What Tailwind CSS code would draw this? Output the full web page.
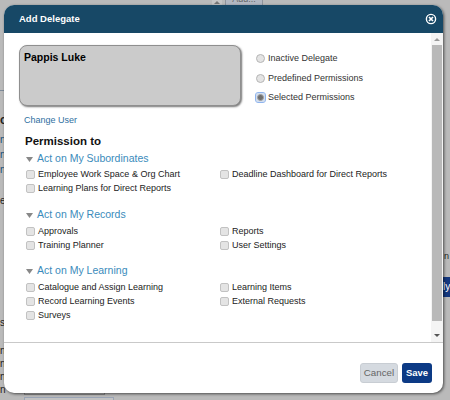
<!DOCTYPE html>
<html>
<head>
<script src="https://cdn.jsdelivr.net/npm/@tailwindcss/browser@4"></script>
</head>
<body class="m-0">
<div class="relative w-[450px] h-[400px] overflow-hidden bg-[#bababa] font-['Liberation_Sans',Arial,sans-serif]">
  <div class="absolute left-[212px] top-0 w-[10px] h-[5px] bg-[#c6c6c6] flex justify-center pt-[1px]"><svg class="w-[6px] h-[3px]" viewBox="0 0 6 3"><path d="M0 3h6L3 0z" fill="#777"/></svg></div>
  <div class="absolute left-[225px] top-0 w-[38px] h-[5px] bg-[#b3b8c2] border-x border-[#8f949c] overflow-hidden text-[9px] text-[#666] text-center leading-[9px]"><span class="relative -top-[5px]">Add...</span></div>
  <div class="absolute left-0 top-[90px] w-[4px] h-px bg-[#7d8a99]"></div>
  <div class="absolute left-0 top-[113px] text-[12px] leading-[14px] font-bold text-[#222]">c</div>
  <div class="absolute left-0 top-[133px] text-[10px] leading-[14px] text-[#17507a]">n</div>
  <div class="absolute left-0 top-[148px] text-[10px] leading-[14px] text-[#17507a]">n</div>
  <div class="absolute left-0 top-[163px] text-[10px] leading-[14px] text-[#17507a]">n</div>
  <div class="absolute left-0 top-[194px] text-[10px] leading-[14px] text-[#222]">e</div>
  <div class="absolute left-0 top-[316px] text-[10px] leading-[14px] text-[#222]">s</div>
  <div class="absolute left-0 top-[344px] text-[10px] leading-[14px] text-[#222]">n</div>
  <div class="absolute left-0 top-[357px] text-[10px] leading-[14px] text-[#222]">n</div>
  <div class="absolute left-0 top-[370px] text-[10px] leading-[14px] text-[#222]">n</div>
  <div class="absolute left-0 top-[383px] text-[10px] leading-[14px] text-[#222]">n</div>
  <div class="absolute left-[444px] top-[249px] w-[6px] overflow-hidden whitespace-nowrap text-[9px] leading-[14px] text-[#222]">n t</div>
  <div class="absolute left-[443px] top-[277px] w-[7px] h-[20px] bg-[#14387f] text-white text-[10px] leading-[20px] overflow-hidden">ly</div>
  <div class="absolute left-[24px] top-[397px] w-[90px] h-[4px] border border-[#9aa4b5] bg-[#c2c2c2]"></div>
  <div class="absolute left-[24px] top-[390px] w-[81px] h-[5px] border border-[#888] bg-[#bdbdbd]"></div>

  <div class="absolute left-[4px] top-[5px] w-[439px] h-[388px] flex flex-col bg-white rounded-[10px] shadow-[1px_1px_3px_rgba(0,0,0,0.6)] overflow-hidden">
    <div class="h-[28px] shrink-0 bg-[#174866] flex items-center justify-between pl-[15px] pr-[6px]">
      <span class="text-white font-bold text-[9.5px]">Add Delegate</span>
      <svg class="w-[12px] h-[12px]" viewBox="0 0 12 12"><circle cx="6" cy="6" r="4.6" fill="none" stroke="#fff" stroke-width="1.4"/><path d="M4 4l4 4M8 4l-4 4" stroke="#fff" stroke-width="1.7"/></svg>
    </div>
    <div class="relative h-[310px] shrink-0 flex border-b border-[#c9c9c9]">
      <div class="flex-1 pl-[15px] pt-[12px]">
        <div class="flex">
          <div class="w-[222px] h-[61px] rounded-[8px] bg-[#cbcbcb] border border-[#8f8f8f] shadow-[1px_1px_2px_rgba(0,0,0,0.55)] px-[4px] py-[4px] text-[10.5px] leading-[14px] font-bold text-black">Pappis Luke</div>
          <div class="ml-[15px] pt-[4px] flex flex-col">
            <label class="h-[19.5px] flex items-center gap-[3px] text-[9px] text-[#333]"><span class="w-[9px] h-[9px] rounded-full border border-[#b5b5b5] bg-[#e4e4e4]"></span>Inactive Delegate</label>
            <label class="h-[19.5px] flex items-center gap-[3px] text-[9px] text-[#333]"><span class="w-[9px] h-[9px] rounded-full border border-[#b5b5b5] bg-[#e4e4e4]"></span>Predefined Permissions</label>
            <label class="h-[19.5px] flex items-center gap-[3px] text-[9px] text-[#333]"><span class="w-[9px] h-[9px] rounded-[2px] bg-[#d3deee] outline outline-[1px] outline-[#8fb4ee] flex items-center justify-center"><span class="w-[7px] h-[7px] rounded-full bg-[#6f6f6f] border border-[#a0a0a0]"></span></span>Selected Permissions</label>
          </div>
        </div>
        <div class="mt-[6px] ml-[5px] text-[9px] leading-[12px] text-[#2f6f9f]">Change User</div>
        <div class="mt-[8px] ml-[6px] text-[11.5px] leading-[15px] font-bold text-[#111]">Permission to</div>

        <div class="mt-[4px] ml-[7px] flex items-center gap-[4px] h-[13px] text-[#3a8bbb] text-[10.5px]"><svg class="w-[7px] h-[5px]" viewBox="0 0 7 5"><path d="M0 0h7L3.5 5z" fill="#888"/></svg>Act on My Subordinates</div>
        <div class="mt-[2px] ml-[7px] grid grid-cols-[194px_1fr] auto-rows-[14px] text-[9px] text-[#222]">
          <label class="flex items-center gap-[3px]"><span class="w-[9px] h-[9px] rounded-[2px] border border-[#c2c2c2] bg-[#e4e4e4]"></span>Employee Work Space &amp; Org Chart</label>
          <label class="flex items-center gap-[3px]"><span class="w-[9px] h-[9px] rounded-[2px] border border-[#c2c2c2] bg-[#e4e4e4]"></span>Deadline Dashboard for Direct Reports</label>
          <label class="flex items-center gap-[3px]"><span class="w-[9px] h-[9px] rounded-[2px] border border-[#c2c2c2] bg-[#e4e4e4]"></span>Learning Plans for Direct Reports</label>
        </div>

        <div class="mt-[13px] ml-[7px] flex items-center gap-[4px] h-[13px] text-[#3a8bbb] text-[10.5px]"><svg class="w-[7px] h-[5px]" viewBox="0 0 7 5"><path d="M0 0h7L3.5 5z" fill="#888"/></svg>Act on My Records</div>
        <div class="mt-[3px] ml-[7px] grid grid-cols-[194px_1fr] auto-rows-[14px] text-[9px] text-[#222]">
          <label class="flex items-center gap-[3px]"><span class="w-[9px] h-[9px] rounded-[2px] border border-[#c2c2c2] bg-[#e4e4e4]"></span>Approvals</label>
          <label class="flex items-center gap-[3px]"><span class="w-[9px] h-[9px] rounded-[2px] border border-[#c2c2c2] bg-[#e4e4e4]"></span>Reports</label>
          <label class="flex items-center gap-[3px]"><span class="w-[9px] h-[9px] rounded-[2px] border border-[#c2c2c2] bg-[#e4e4e4]"></span>Training Planner</label>
          <label class="flex items-center gap-[3px]"><span class="w-[9px] h-[9px] rounded-[2px] border border-[#c2c2c2] bg-[#e4e4e4]"></span>User Settings</label>
        </div>

        <div class="mt-[12px] ml-[7px] flex items-center gap-[4px] h-[13px] text-[#3a8bbb] text-[10.5px]"><svg class="w-[7px] h-[5px]" viewBox="0 0 7 5"><path d="M0 0h7L3.5 5z" fill="#888"/></svg>Act on My Learning</div>
        <div class="mt-[3px] ml-[7px] grid grid-cols-[194px_1fr] auto-rows-[14px] text-[9px] text-[#222]">
          <label class="flex items-center gap-[3px]"><span class="w-[9px] h-[9px] rounded-[2px] border border-[#c2c2c2] bg-[#e4e4e4]"></span>Catalogue and Assign Learning</label>
          <label class="flex items-center gap-[3px]"><span class="w-[9px] h-[9px] rounded-[2px] border border-[#c2c2c2] bg-[#e4e4e4]"></span>Learning Items</label>
          <label class="flex items-center gap-[3px]"><span class="w-[9px] h-[9px] rounded-[2px] border border-[#c2c2c2] bg-[#e4e4e4]"></span>Record Learning Events</label>
          <label class="flex items-center gap-[3px]"><span class="w-[9px] h-[9px] rounded-[2px] border border-[#c2c2c2] bg-[#e4e4e4]"></span>External Requests</label>
          <label class="flex items-center gap-[3px]"><span class="w-[9px] h-[9px] rounded-[2px] border border-[#c2c2c2] bg-[#e4e4e4]"></span>Surveys</label>
        </div>
      </div>
      <div class="w-[12px] shrink-0 bg-[#f4f4f4] flex flex-col items-center">
        <div class="h-[12px] w-full flex items-center justify-center"><svg class="w-[6px] h-[3px]" viewBox="0 0 6 3"><path d="M0 3h6L3 0z" fill="#999"/></svg></div>
        <div class="w-[10px] h-[276px] bg-[#b9b9b9]"></div>
        <div class="flex-1 w-full flex items-end justify-center pb-[5px]"><svg class="w-[6px] h-[3px]" viewBox="0 0 6 3"><path d="M0 0h6L3 3z" fill="#555"/></svg></div>
      </div>
    </div>
    <div class="flex-1 flex items-start justify-end gap-[4px] pr-[11px] pt-[20px]">
      <button class="w-[38px] h-[20px] rounded-[3px] bg-[#d5dae0] border border-[#c8cdd3] text-[9.75px] text-[#666]">Cancel</button>
      <button class="w-[30px] h-[20px] rounded-[3px] bg-[#0c3a85] text-[9.5px] font-bold text-white">Save</button>
    </div>
  </div>
</div>
</body>
</html>
